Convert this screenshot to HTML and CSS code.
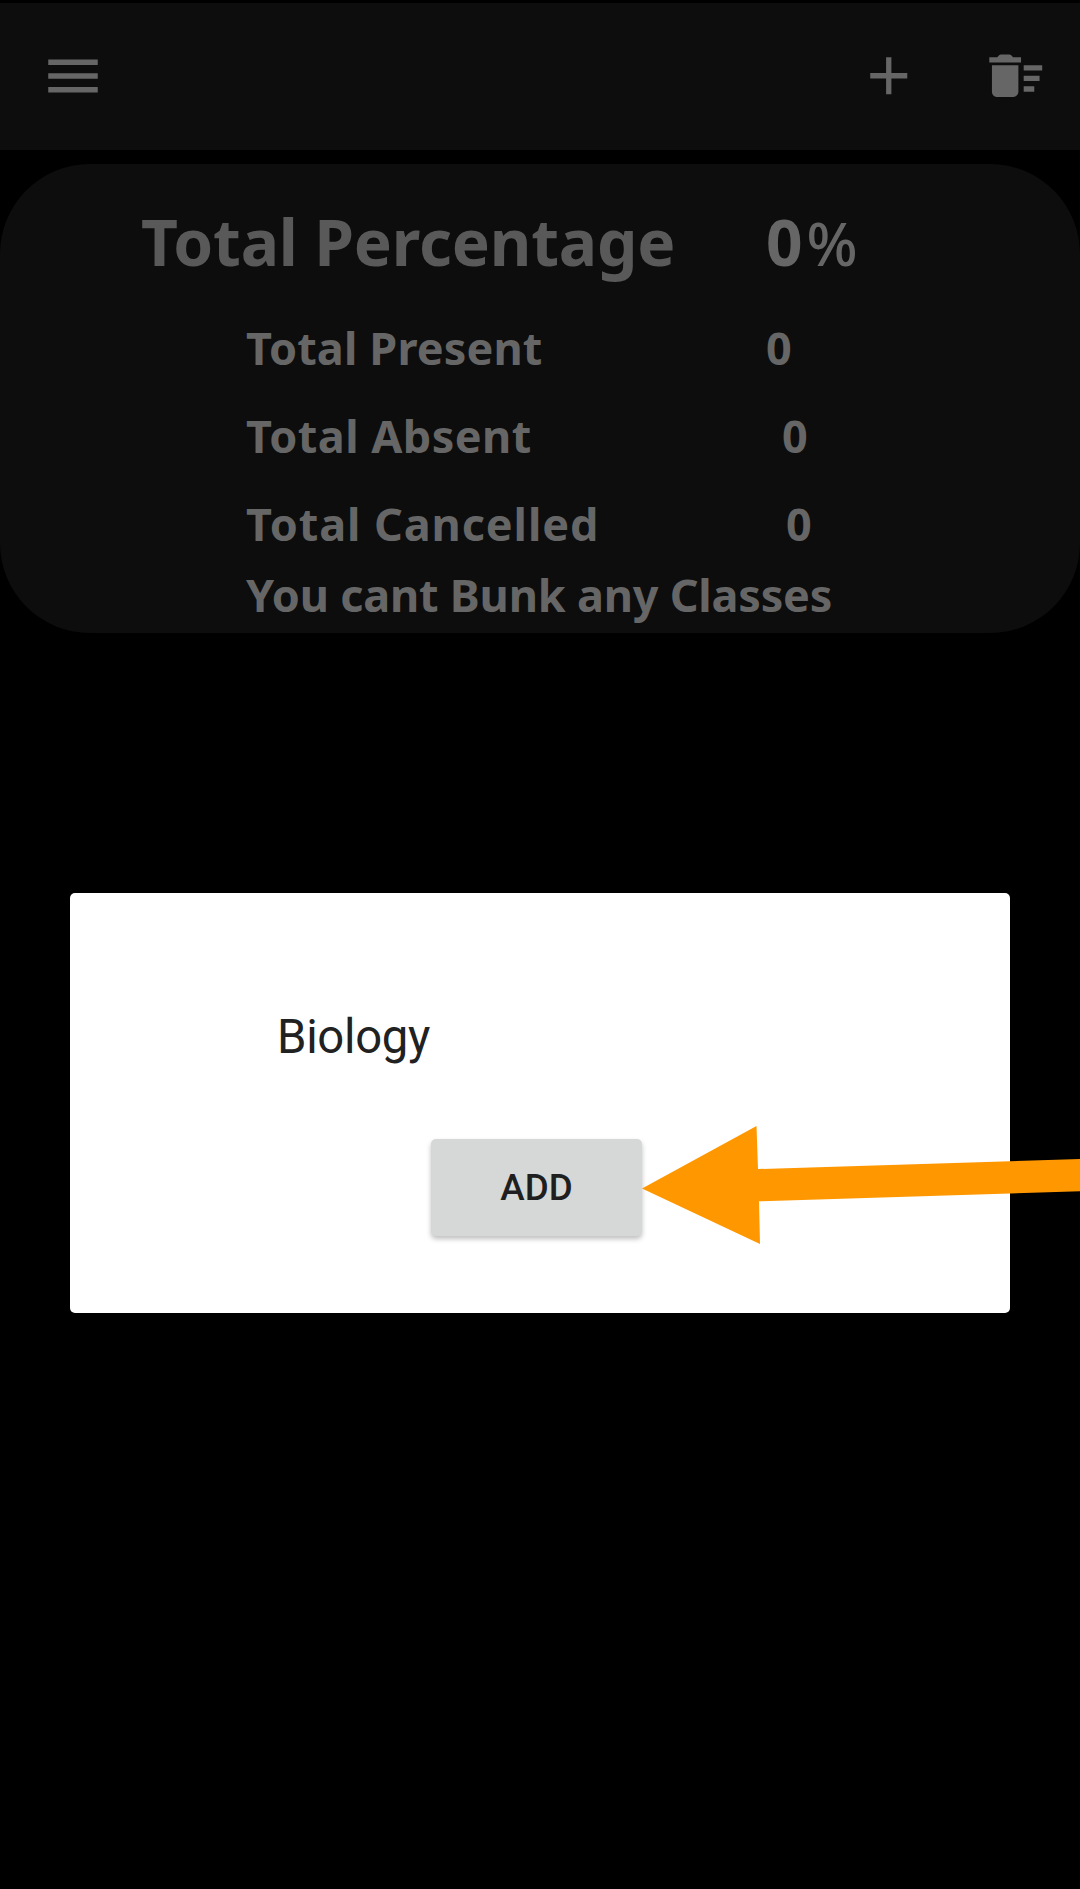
FILE: index.html
```html
<!DOCTYPE html>
<html lang="en">
<head>
<meta charset="utf-8">
<title>Attendance</title>
<link rel="stylesheet" href="styles.css">
</head>
<body>
<div class="screen">
  <header class="toolbar">
    <svg class="icon-menu" viewBox="0 0 24 24"><path d="M3 18h18v-2H3v2zm0-5h18v-2H3v2zm0-7v2h18V6H3z"/></svg>
    <div class="actions">
      <svg class="icon" viewBox="0 0 24 24"><path d="M19 13h-6v6h-2v-6H5v-2h6V5h2v6h6v2z"/></svg>
      <svg class="icon" viewBox="0 0 24 24"><path d="M15 16h4v2h-4zm0-8h7v2h-7zm0 4h6v2h-6zM3 18c0 1.1.9 2 2 2h6c1.100 0 2-.9 2-2V8H3v10zM14 5h-3l-.71-.71Q10 4 9.590 4H6.410Q6 4 5.710 4.290L5 5H2v2h12z"/></svg>
    </div>
  </header>
  <section class="summary">
    <div class="row total"><span class="label">Total Percentage</span><span class="value">0<span class="percent">%</span></span></div>
    <div class="row present"><span class="label">Total Present</span><span class="value">0</span></div>
    <div class="row absent"><span class="label">Total Absent</span><span class="value">0</span></div>
    <div class="row cancelled"><span class="label">Total Cancelled</span><span class="value">0</span></div>
    <div class="row note">You cant Bunk any Classes</div>
  </section>
  <main class="dialog">
    <div class="subject">Biology</div>
    <button class="add" type="button">ADD</button>
  </main>
  <svg class="arrow" viewBox="0 0 438 118"><path d="M0 62.500 114.500 0 116 43 438 33v32.300L117 75.300l1 42.700z"/></svg>
</div>
</body>
</html>
```
FILE: styles.css
```css
* { box-sizing: border-box; }
body { margin: 0; background: #000; }
.screen {
  position: relative;
  width: 1080px;
  height: 1889px;
  padding-top: 3px;
  overflow: hidden;
  background: #000;
}
.toolbar {
  display: flex;
  justify-content: space-between;
  align-items: center;
  height: 147px;
  padding: 0 32px 2px 40px;
  background: #0d0d0d;
  fill: #666;
}
.icon-menu { width: 66px; height: 66px; }
.actions { display: flex; gap: 63px; }
.icon { width: 63.500px; height: 63.500px; }
.icon:last-child { margin-right: 1px; }
.summary {
  height: 469px;
  margin-top: 14px;
  padding: 34px 0 0 246px;
  border-radius: 90px;
  background: #0d0d0d;
  color: #666;
  font: 700 45px/88px "Noto Sans", sans-serif;
  white-space: nowrap;
}
.row { display: flex; height: 88px; }
.label { width: 520px; }
.total { margin: 0 0 18px -105px; font-size: 64px; }
.total .label { width: 625px; color: #595959; letter-spacing: -.18px; }
.percent { margin-left: 4px; font-size: 60px; font-weight: 500; }
.present .label { letter-spacing: .13px; }
.absent .label { letter-spacing: .450px; }
.absent .value { margin-left: 16px; }
.cancelled .label { letter-spacing: .9px; }
.cancelled .value { margin-left: 20px; }
.note { height: 54px; line-height: 54px; letter-spacing: -.2px; }
.dialog {
  display: flex;
  flex-direction: column;
  width: 940px;
  height: 420px;
  margin: 260px 0 0 70px;
  padding-top: 114px;
  border-radius: 5px;
  background: #fff;
  color: #212121;
  font-family: Roboto, sans-serif;
}
.subject { margin-left: 207px; font-size: 47.250px; line-height: 60px; letter-spacing: -.3px; }
.add {
  width: 211px;
  height: 97px;
  margin: 72px 0 0 361px;
  padding: 1px 0 0;
  border: 0;
  border-radius: 5px;
  background: #d6d7d7;
  box-shadow: 0 3px 5px rgba(0, 0, 0, .25);
  color: #1f1f1f;
  font: 500 36.750px/96px Roboto, sans-serif;
}
.arrow {
  position: absolute;
  left: 642px;
  top: 1126px;
  width: 438px;
  height: 118px;
  fill: #ff9800;
}
```
